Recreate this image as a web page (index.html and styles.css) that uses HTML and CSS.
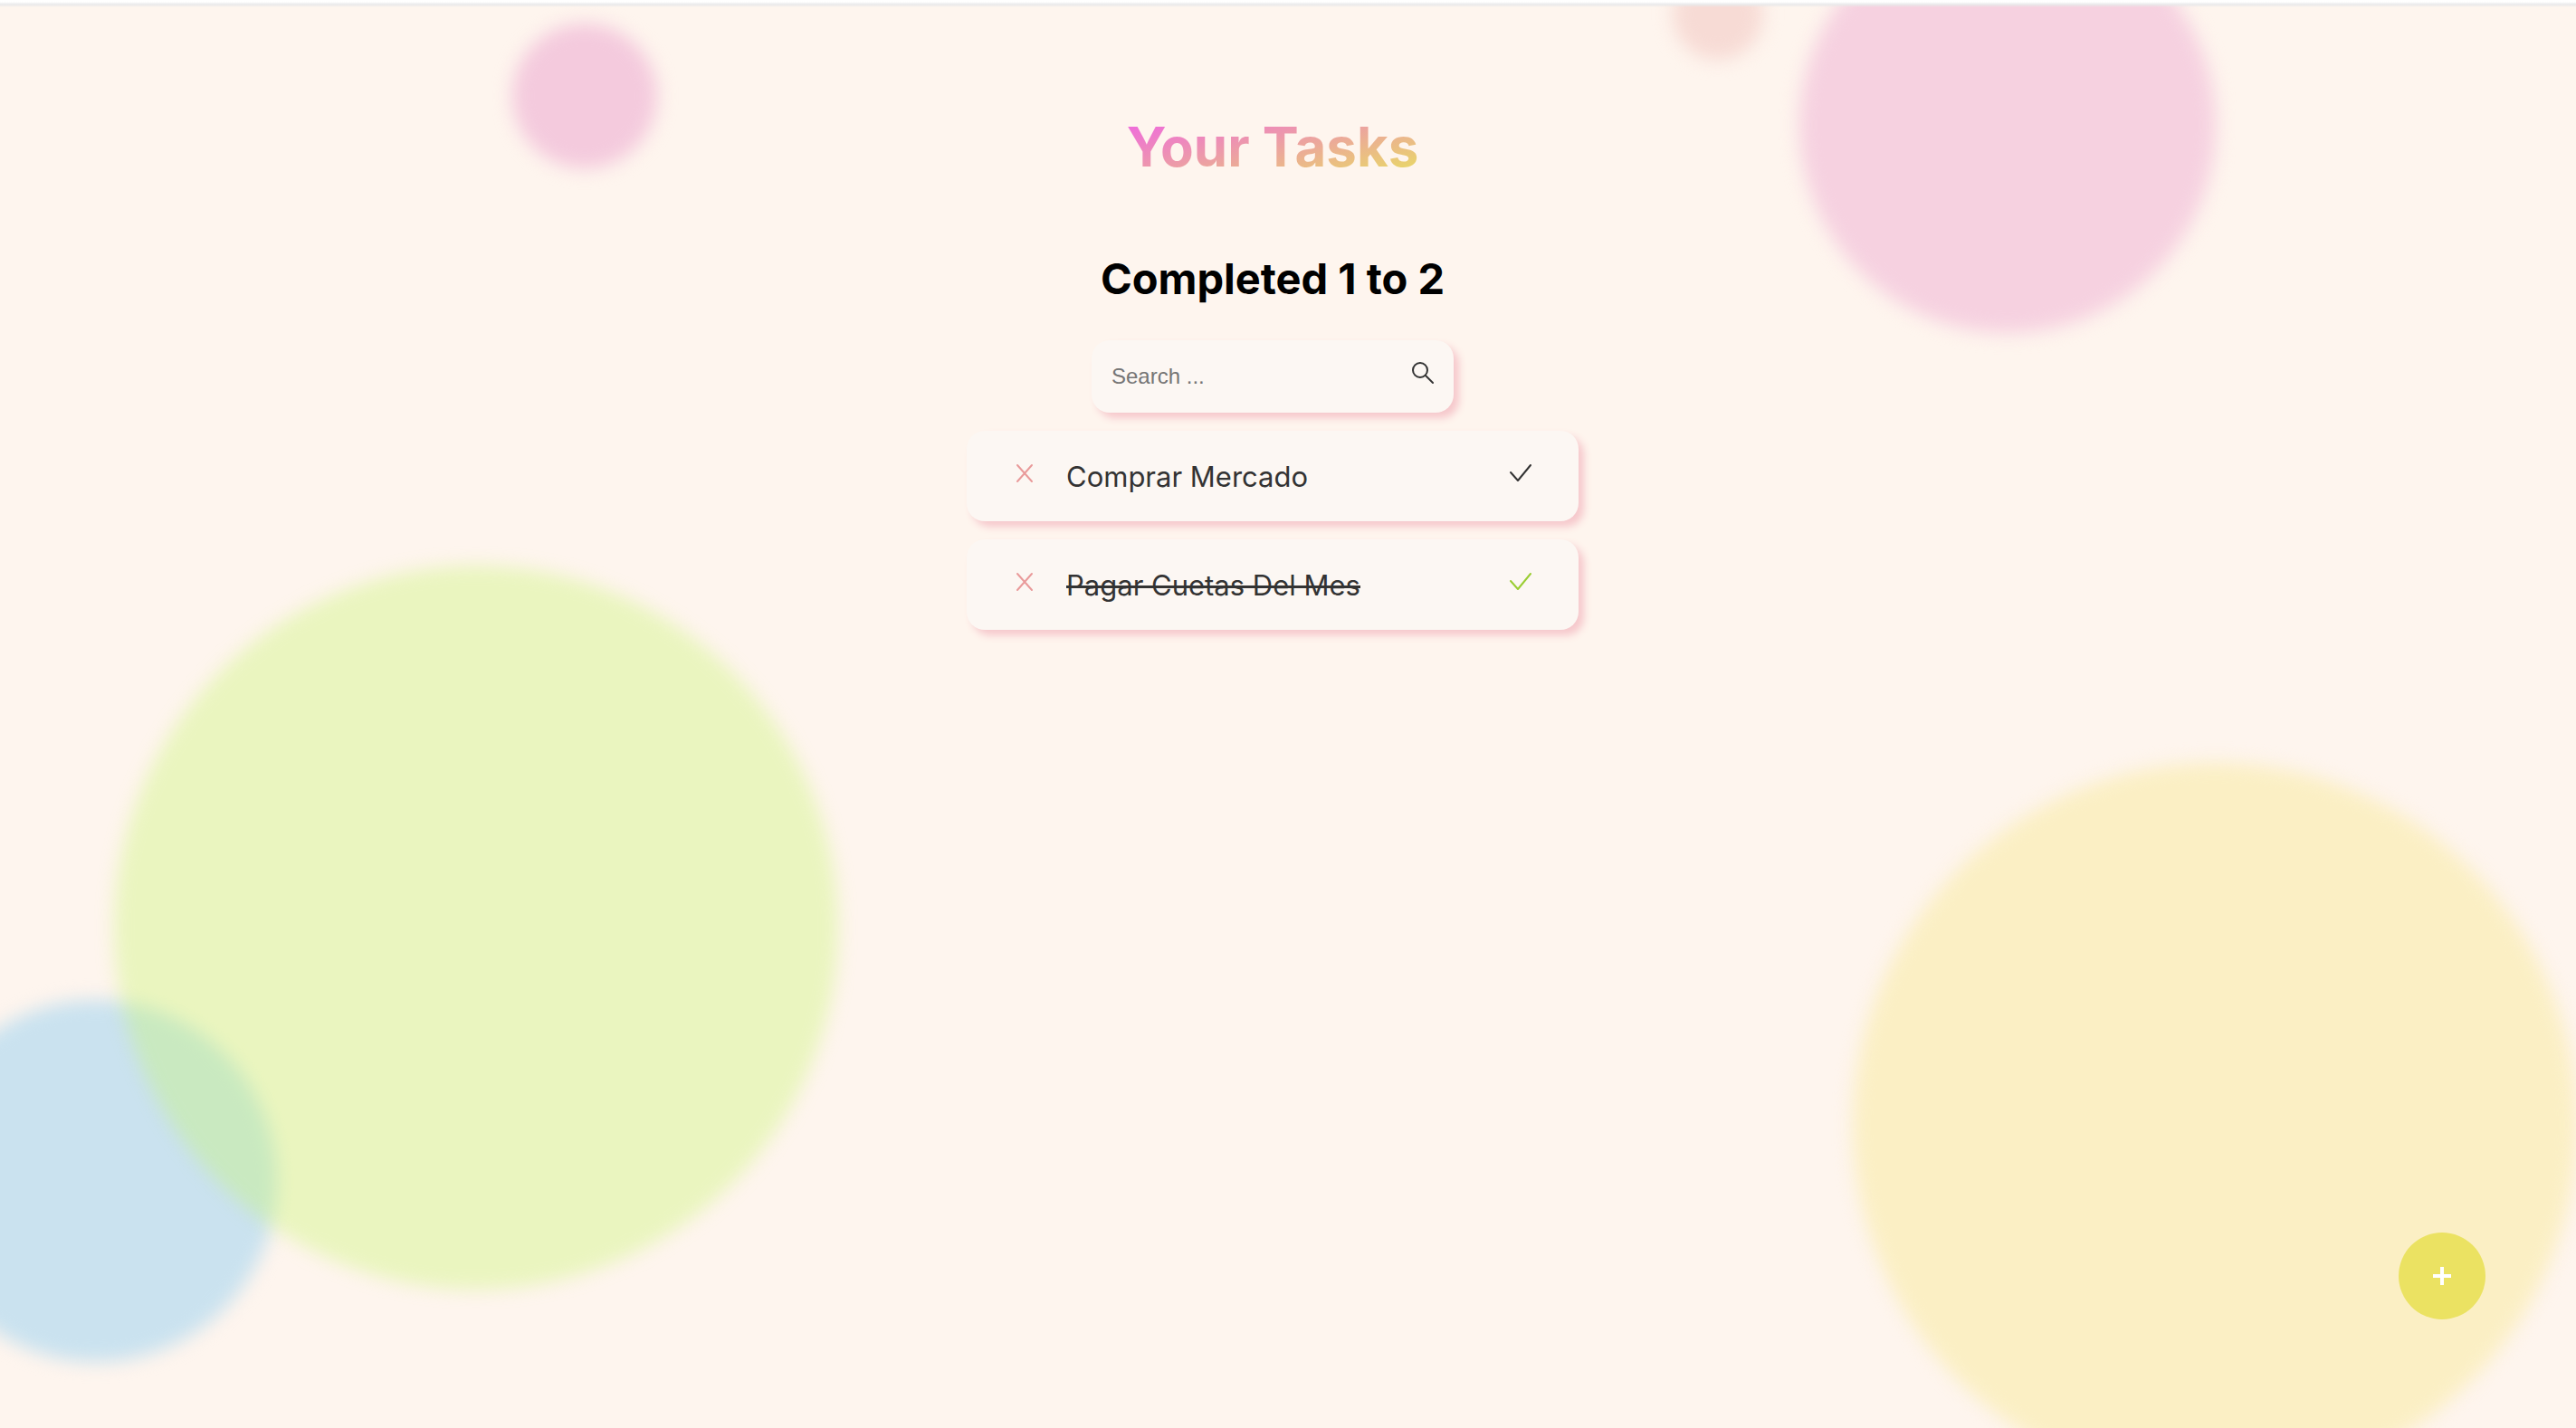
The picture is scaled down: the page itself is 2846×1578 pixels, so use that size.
FILE: index.html
```html
<!DOCTYPE html>
<html lang="en">
<head>
  <meta charset="utf-8">
  <meta name="viewport" content="width=device-width, initial-scale=1">
  <title>Your Tasks</title>
  <link rel="stylesheet" href="styles.css">
</head>
<body>
  <div class="backdrop" aria-hidden="true">
    <span class="bubble bubble-rose"></span>
    <span class="bubble bubble-peach"></span>
    <span class="bubble bubble-pink"></span>
    <span class="bubble bubble-blue"></span>
    <span class="bubble bubble-green"></span>
    <span class="bubble bubble-yellow"></span>
  </div>

  <main class="app">
    <h1 class="title">Your Tasks</h1>
    <h2 class="counter">Completed 1 to 2</h2>

    <form class="search" role="search">
      <input class="search-input" type="text" placeholder="Search ..." aria-label="Search tasks">
      <button class="icon-button" type="button" aria-label="Search">
        <svg class="icon" viewBox="0 0 24 24"><circle cx="9" cy="9" r="8"/><path d="M15 15l8 8"/></svg>
      </button>
    </form>

    <ul class="tasks">
      <li class="task">
        <button class="icon-button delete" type="button" aria-label="Delete Comprar Mercado">
          <svg class="icon" viewBox="0 0 24 24"><path d="M4 3l16 18M20 3L4 21"/></svg>
        </button>
        <p class="task-text">Comprar Mercado</p>
        <button class="icon-button check" type="button" aria-label="Complete Comprar Mercado">
          <svg class="icon" viewBox="0 0 24 24"><path d="M1 11l8 9L23 3"/></svg>
        </button>
      </li>
      <li class="task task-done">
        <button class="icon-button delete" type="button" aria-label="Delete Pagar Cuetas Del Mes">
          <svg class="icon" viewBox="0 0 24 24"><path d="M4 3l16 18M20 3L4 21"/></svg>
        </button>
        <p class="task-text">Pagar Cuetas Del Mes</p>
        <button class="icon-button check" type="button" aria-label="Complete Pagar Cuetas Del Mes">
          <svg class="icon" viewBox="0 0 24 24"><path d="M1 11l8 9L23 3"/></svg>
        </button>
      </li>
    </ul>
  </main>

  <button class="add" type="button" aria-label="Add task">
    <svg class="add-icon" viewBox="0 0 20 20"><path d="M10 0v20M0 10h20"/></svg>
  </button>
</body>
</html>
```
FILE: styles.css
```css
* {
  box-sizing: border-box;
}

body {
  position: relative;
  min-height: 100vh;
  margin: 0;
  overflow: hidden;
  background: #fef5ee;
  color: #333;
  font-family: Inter, "Noto Sans", sans-serif;
}

/* thin white edge that fades through grey along the top */
body::before {
  content: "";
  display: block;
  height: 8px;
  background: linear-gradient(#fff 2px, #e9e9ea 5px, transparent 8px);
}

.backdrop {
  position: absolute;
  inset: 4px 0 0;
  overflow: hidden;
  z-index: -1;
}

.bubble {
  position: absolute;
  border-radius: 50%;
  filter: blur(10px);
}

.bubble-rose {
  top: 22px;
  left: 566px;
  width: 160px;
  height: 160px;
  background: #f4cadd;
}

.bubble-peach {
  top: -38px;
  right: 898px;
  width: 100px;
  height: 100px;
  background: #f7dbd5;
}

.bubble-pink {
  top: -96px;
  right: 398px;
  width: 460px;
  height: 460px;
  background: #f6d1e0;
}

.bubble-blue {
  bottom: 73px;
  left: -94px;
  width: 400px;
  height: 400px;
  background: #cae2ef;
}

.bubble-green {
  bottom: 153px;
  left: 126px;
  width: 800px;
  height: 800px;
  background: rgba(200, 247, 108, 0.36);
}

.bubble-yellow {
  right: -1px;
  bottom: -65px;
  width: 800px;
  height: 800px;
  background: #fbefc4;
}

.app {
  display: flex;
  flex-direction: column;
  align-items: center;
  padding: 114px 34px 40px 0;
}

.title {
  margin: 0;
  background: linear-gradient(to bottom right, #f05eea, #e8e45a);
  background-clip: text;
  color: transparent;
  font-size: 60px;
  font-weight: 700;
  line-height: 80px;
}

.counter {
  margin: 76px 0 38px;
  color: #000;
  font-size: 47px;
  font-weight: 700;
  line-height: 60px;
}

.search,
.task {
  display: flex;
  align-items: center;
  border-radius: 20px;
  background: #fcf7f3;
  box-shadow: 6px 6px 8px #f6c8cc;
}

.search {
  width: 400px;
  height: 80px;
  padding: 0 22px;
}

.search-input {
  flex: 1;
  min-width: 0;
  padding: 0;
  border: 0;
  outline: 0;
  background: none;
  color: #333;
  font: 24px "Liberation Sans", Arial, sans-serif;
}

.search-input::placeholder {
  color: #757575;
}

.icon-button {
  display: flex;
  padding: 0 0 8px;
  border: 0;
  background: none;
  color: #333;
  cursor: pointer;
}

.icon {
  width: 24px;
  height: 24px;
  fill: none;
  stroke: currentColor;
  stroke-width: 2;
  stroke-linecap: round;
  stroke-linejoin: round;
}

.tasks {
  display: grid;
  gap: 20px;
  width: 676px;
  max-width: 100%;
  margin: 20px 0 0;
  padding: 0;
  list-style: none;
}

.task {
  gap: 34px;
  min-height: 100px;
  padding: 2px 52px 0;
}

.task-text {
  flex: 1;
  margin: 0;
  font-size: 31px;
  line-height: 40px;
}

.task-done .task-text {
  text-decoration: line-through;
  text-decoration-thickness: 3px;
}

.delete {
  color: #e99a9a;
}

.task-done .check {
  color: #9acd32;
}

.add {
  display: grid;
  place-items: center;
  position: fixed;
  right: 100px;
  bottom: 120px;
  width: 96px;
  height: 96px;
  padding: 0;
  border: 0;
  border-radius: 50%;
  background: #ebe262;
  color: #fff;
  cursor: pointer;
}

.add-icon {
  width: 20px;
  height: 20px;
  fill: none;
  stroke: currentColor;
  stroke-width: 4;
}
```
